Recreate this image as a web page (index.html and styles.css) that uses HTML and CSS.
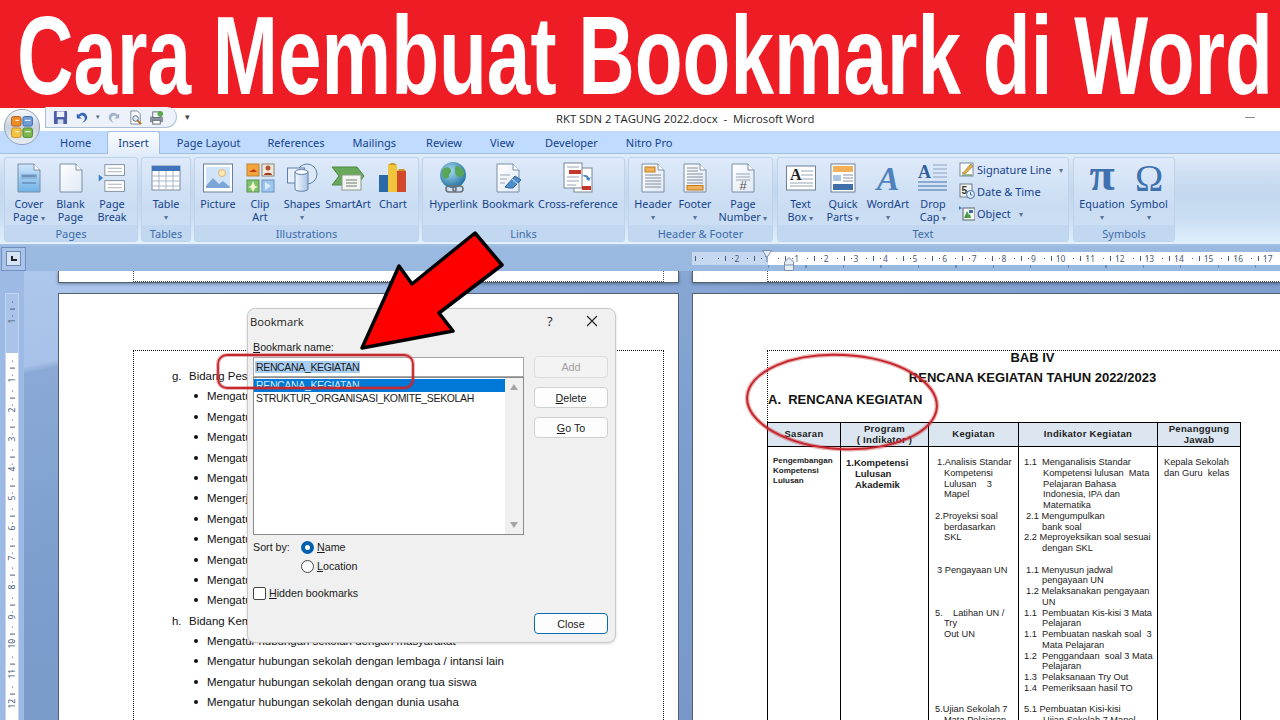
FILE: index.html
```html
<!DOCTYPE html>
<html lang="id">
<head>
<meta charset="utf-8">
<title>Cara Membuat Bookmark di Word</title>
<link rel="stylesheet" href="styles.css">
</head>
<body>
<svg class="defs" width="0" height="0" aria-hidden="true">
  <defs>
    <linearGradient id="gPaper" x1="0" y1="0" x2="1" y2="1"><stop offset="0" stop-color="#ffffff"/><stop offset="1" stop-color="#dfe8f4"/></linearGradient>
    <linearGradient id="gCover" x1="0" y1="0" x2="0" y2="1"><stop offset="0" stop-color="#cfe6fa"/><stop offset="1" stop-color="#6fb2e8"/></linearGradient>
    <linearGradient id="gOrb" x1="0" y1="0" x2="0" y2="1"><stop offset="0" stop-color="#f7f9fc"/><stop offset=".5" stop-color="#c7d3e2"/><stop offset="1" stop-color="#e9eff5"/></linearGradient>
    <radialGradient id="gGlobe" cx=".4" cy=".35" r=".7"><stop offset="0" stop-color="#a6dcef"/><stop offset="1" stop-color="#1f6d9f"/></radialGradient>
    <linearGradient id="gCyl" x1="0" y1="0" x2="1" y2="0"><stop offset="0" stop-color="#f4f8fd"/><stop offset="1" stop-color="#a9c5e6"/></linearGradient>
  </defs>
</svg>
<div class="app">
  <header class="banner"><h1 class="banner-text">Cara Membuat Bookmark di Word</h1></header>

  <div class="titlebar">
    <div class="qat">
      <svg class="qi" viewBox="0 0 16 16"><rect x="1" y="1" width="14" height="14" rx="1" fill="#4a5fa8"/><rect x="4" y="1.500" width="8" height="6" fill="#eef2fa"/><rect x="5" y="10" width="6" height="5" fill="#d4dbe9"/></svg>
      <svg class="qi" viewBox="0 0 16 16"><path d="M3 4v5h5L6 7c2.500-2 5-1 5.500 1.500.3 2-1 3.500-3 5 4-1 6-3.500 5.500-6.500C13 3 8.500 1.500 5 5z" fill="#3468b8"/></svg>
      <span class="qcaret">▾</span>
      <svg class="qi" viewBox="0 0 16 16"><path d="M13 4v5H8l2-2C8 5 5 6 4.500 8.500c-.3 2 1 3.500 3 5-4-1-6-3.500-5.500-6.500C3 3 7.500 1.500 11 5z" fill="#a3b2c6"/></svg>
      <svg class="qi" viewBox="0 0 16 16"><path d="M3 1h7l3 3v11H3z" fill="#fff" stroke="#7a8696"/><circle cx="8" cy="9" r="3" fill="#dfeaf6" stroke="#566478"/><path d="M10 11l4 4" stroke="#b8701d" stroke-width="2"/></svg>
      <svg class="qi" viewBox="0 0 16 16"><rect x="1" y="7" width="14" height="6" rx="1" fill="#8b93a0"/><rect x="4" y="2" width="8" height="6" fill="#eef1f5" stroke="#626a76"/><rect x="4" y="11" width="8" height="4" fill="#fff" stroke="#626a76"/><circle cx="12" cy="4" r="3" fill="#5ba84a"/></svg>
    </div>
    <span class="qat-more">▾</span>
    <div class="doc-title">RKT SDN 2 TAGUNG 2022.docx&nbsp; -&nbsp; Microsoft Word</div>
    <span class="minimize"></span>
  </div>

  <nav class="tabs">
    <span class="tab t-home">Home</span>
    <span class="tab t-insert">Insert</span>
    <span class="tab t-layout">Page Layout</span>
    <span class="tab t-ref">References</span>
    <span class="tab t-mail">Mailings</span>
    <span class="tab t-review">Review</span>
    <span class="tab t-view">View</span>
    <span class="tab t-dev">Developer</span>
    <span class="tab t-nitro">Nitro Pro</span>
  </nav>

  <section class="ribbon">
    <div class="group g-pages">
      <div class="tools">
        <div class="btn w42"><svg class="ico" viewBox="0 0 32 32"><path d="M5 2h16l6 6v22H5z" fill="url(#gCover)" stroke="#7a8ea6"/><path d="M21 2v6h6" fill="#fff" stroke="#7a8ea6"/><rect x="8" y="12" width="16" height="5" fill="#8ab4dc"/><path d="M9 14h14M9 21h14" stroke="#55719a"/></svg><span class="lbl">Cover<br>Page <i class="car">▾</i></span></div>
        <div class="btn w41"><svg class="ico" viewBox="0 0 32 32"><path d="M5 2h16l6 6v22H5z" fill="url(#gPaper)" stroke="#7a8ea6"/><path d="M21 2v6h6" fill="#fff" stroke="#7a8ea6"/></svg><span class="lbl">Blank<br>Page</span></div>
        <div class="btn w42"><svg class="ico" viewBox="0 0 36 32"><rect x="10" y="1" width="22" height="12" fill="#fff" stroke="#7a8696"/><rect x="10" y="19" width="22" height="12" fill="#fff" stroke="#7a8696"/><path d="M13 5h16M13 9h16M13 23h16M13 27h16" stroke="#9aa5b5"/><path d="M3 12l5 4-5 4z" fill="#3f7fc4"/></svg><span class="lbl">Page<br>Break</span></div>
      </div>
      <div class="glabel">Pages</div>
    </div>

    <div class="group g-tables">
      <div class="tools">
        <div class="btn w42"><svg class="ico" viewBox="0 0 32 32"><rect x="2" y="4" width="28" height="24" fill="#fff" stroke="#7d8aa0"/><rect x="2" y="4" width="28" height="5" fill="#3f74bd"/><path d="M2 14h28M2 19h28M2 24h28M9 9v19M16 9v19M23 9v19" stroke="#a9b6c8"/></svg><span class="lbl">Table<i class="car block">▾</i></span></div>
      </div>
      <div class="glabel">Tables</div>
    </div>

    <div class="group g-illus">
      <div class="tools">
        <div class="btn w42"><svg class="ico" viewBox="0 0 32 32"><rect x="1.500" y="2" width="29" height="28" fill="#fff" stroke="#6f7f96"/><rect x="4" y="5" width="24" height="21" fill="#cfe4f8"/><circle cx="20" cy="11" r="3.500" fill="#fbe7b8" stroke="#e3b36a"/><path d="M4 24l7-8 6 6 4-3 7 6v1H4z" fill="#7ba6d6"/></svg><span class="lbl">Picture</span></div>
        <div class="btn w42"><svg class="ico" viewBox="0 0 32 32"><rect x="3" y="2" width="12" height="12" fill="#f3a43a" stroke="#b98538"/><path d="M5 10l5-3 3 3z" fill="#c2341c"/><rect x="18" y="2" width="12" height="12" fill="#efe9dc" stroke="#8c8478"/><circle cx="24" cy="6" r="2.500" fill="#b3522e"/><path d="M20 13c0-3 8-3 8 0z" fill="#a6381f"/><rect x="3" y="18" width="12" height="12" fill="#7cc46a" stroke="#5d8f50"/><path d="M9 19l2 5 3 1-3 1-2 4-2-4-3-1 3-1z" fill="#f8f3d6"/><rect x="18" y="18" width="12" height="12" fill="#9cc5ee" stroke="#6b93bf"/><path d="M21 20l6 4-6 4z" fill="#d9ebfb"/></svg><span class="lbl">Clip<br>Art</span></div>
        <div class="btn w42"><svg class="ico" viewBox="0 0 32 32"><circle cx="21" cy="12" r="10" fill="#dbe8f6" stroke="#5f80a8"/><rect x="1.500" y="6" width="17" height="15" fill="#e8f0f9" stroke="#5f80a8"/><path d="M9 10v17c0 3 13 3 13 0V10z" fill="url(#gCyl)" stroke="#5f80a8"/><ellipse cx="15.500" cy="10" rx="6.500" ry="2.500" fill="#f5f9fd" stroke="#5f80a8"/></svg><span class="lbl">Shapes<i class="car block">▾</i></span></div>
        <div class="btn w50"><svg class="ico wide" viewBox="0 0 34 32"><path d="M1 5h25l7 9-7 9H1l7-9z" fill="#67a85b" stroke="#4b8a44"/><rect x="11" y="13" width="19" height="15" fill="#f3f5f3" stroke="#8c998c"/><path d="M15 18h11M15 21h11M15 24h11" stroke="#6d7a6d"/></svg><span class="lbl">SmartArt</span></div>
        <div class="btn w40"><svg class="ico" viewBox="0 0 32 32"><rect x="2" y="13" width="9" height="17" fill="#2a69a8"/><rect x="11" y="3" width="9" height="27" fill="#f1c53b"/><rect x="20" y="9" width="9" height="21" fill="#d1482c"/><path d="M11 3l3-2h3l3 2zM20 9l2-2h5l2 2z" fill="#c9992b"/></svg><span class="lbl">Chart</span></div>
      </div>
      <div class="glabel">Illustrations</div>
    </div>

    <div class="group g-links">
      <div class="tools">
        <div class="btn w53"><svg class="ico" viewBox="0 0 32 32"><circle cx="15" cy="13" r="13" fill="url(#gGlobe)"/><path d="M5 7c4-3 7-2 8 1s-2 3-2 6-5 3-6 1-2-5 0-8zM18 4c4 0 7 3 8 6s-3 6-5 5-4-2-4-5 0-5 1-6z" fill="#59a659"/><rect x="8" y="24" width="10" height="6" rx="3" fill="none" stroke="#6c7378" stroke-width="1.600"/><rect x="15" y="24" width="10" height="6" rx="3" fill="none" stroke="#6c7378" stroke-width="1.600"/></svg><span class="lbl">Hyperlink</span></div>
        <div class="btn w56"><svg class="ico" viewBox="0 0 32 32"><path d="M5 2h16l6 6v22H5z" fill="url(#gPaper)" stroke="#7a8ea6"/><path d="M21 2v6h6" fill="#fff" stroke="#7a8ea6"/><path d="M8 13h10M8 17h7M8 21h5" stroke="#9aa5b5"/><path d="M13 25l10-11 6 4-8 8-4 0z" fill="#4d8fca" stroke="#2f6398"/><path d="M20 17l6 5" stroke="#cfe3f6"/></svg><span class="lbl">Bookmark</span></div>
        <div class="btn w84"><svg class="ico" viewBox="0 0 32 32"><rect x="12" y="6" width="18" height="24" fill="#fff" stroke="#7a8696"/><rect x="2" y="1" width="18" height="25" fill="#fdfdfd" stroke="#7a8696"/><path d="M5 5h12M5 15h12M5 19h12M5 23h9" stroke="#9aa5b5"/><rect x="7" y="8" width="12" height="4" fill="#c3372b"/><rect x="20" y="24" width="9" height="4" fill="#c3372b"/><path d="M20 14c3-2 6-1 7 2l2-1-2 4-3-2 1-1c-1-1-3-2-5-2z" fill="#3f7fc4"/></svg><span class="lbl">Cross-reference</span></div>
      </div>
      <div class="glabel">Links</div>
    </div>

    <div class="group g-hf">
      <div class="tools">
        <div class="btn w42"><svg class="ico" viewBox="0 0 32 32"><path d="M5 2h16l6 6v22H5z" fill="url(#gPaper)" stroke="#7a8ea6"/><path d="M21 2v6h6" fill="#fff" stroke="#7a8ea6"/><rect x="8" y="5" width="10" height="5" fill="#f0b158" stroke="#c07d23"/><path d="M8 13h16M8 16h16M8 19h16M8 22h16M8 25h16" stroke="#828c99"/></svg><span class="lbl">Header<i class="car block">▾</i></span></div>
        <div class="btn w42"><svg class="ico" viewBox="0 0 32 32"><path d="M5 2h16l6 6v22H5z" fill="url(#gPaper)" stroke="#7a8ea6"/><path d="M21 2v6h6" fill="#fff" stroke="#7a8ea6"/><path d="M8 6h11M8 9h11M8 12h16M8 15h16M8 18h16M8 21h16" stroke="#828c99"/><rect x="8" y="23.500" width="16" height="4.500" fill="#f0b158" stroke="#c07d23"/></svg><span class="lbl">Footer<i class="car block">▾</i></span></div>
        <div class="btn w54"><svg class="ico" viewBox="0 0 32 32"><path d="M5 2h16l6 6v22H5z" fill="url(#gPaper)" stroke="#7a8ea6"/><path d="M21 2v6h6" fill="#fff" stroke="#7a8ea6"/><path d="M9 12h14M9 15h14M9 18h14" stroke="#9aa5b5"/><text x="16" y="28" class="glyph-hash">#</text></svg><span class="lbl">Page<br>Number <i class="car">▾</i></span></div>
      </div>
      <div class="glabel">Header &amp; Footer</div>
    </div>

    <div class="group g-text">
      <div class="tools">
        <div class="btn w41"><svg class="ico" viewBox="0 0 32 32"><rect x="1.500" y="4" width="29" height="24" fill="#fff" stroke="#6f7f96"/><text x="5" y="18" class="glyph-a">A</text><path d="M16 9h12M16 13h12M16 17h12M5 21h23M5 24h23" stroke="#9aa5b5"/></svg><span class="lbl">Text<br>Box <i class="car">▾</i></span></div>
        <div class="btn w44"><svg class="ico" viewBox="0 0 32 32"><rect x="4" y="2" width="24" height="28" fill="#fff" stroke="#6f7f96"/><rect x="6" y="4" width="20" height="6" fill="#f3b059"/><path d="M6 13h8v6H6z" fill="#a9c5e3"/><path d="M16 13h10M16 16h10M16 19h10" stroke="#8795a6"/><rect x="6" y="22" width="20" height="6" fill="#3f6fa8"/></svg><span class="lbl">Quick<br>Parts <i class="car">▾</i></span></div>
        <div class="btn w46"><svg class="ico" viewBox="0 0 32 32"><text x="16" y="28" class="glyph-wordart">A</text></svg><span class="lbl">WordArt<i class="car block">▾</i></span></div>
        <div class="btn w44"><svg class="ico" viewBox="0 0 32 32"><text x="1" y="16" class="glyph-drop">A</text><path d="M16 3h14M16 7h14M16 11h14M16 15h14" stroke="#8ea3bf"/><path d="M1 20h29M1 24h29M1 28h29" stroke="#3f6fa8"/></svg><span class="lbl">Drop<br>Cap <i class="car">▾</i></span></div>
        <div class="small-list">
          <div class="small"><svg class="sico" viewBox="0 0 16 16"><rect x="1" y="2" width="13" height="13" fill="#fff" stroke="#7a8696"/><path d="M3 12c3-1 5-6 9-9l2 2c-3 3-6 7-8 8z" fill="#e2b03f" stroke="#7b6a36" stroke-width=".5"/><path d="M3 14h10" stroke="#4f8a3f"/></svg>Signature Line <i class="car">▾</i></div>
          <div class="small"><svg class="sico" viewBox="0 0 16 16"><rect x="1" y="1" width="12" height="13" fill="#f2f2ef" stroke="#6f7c8c"/><text x="2.500" y="11" class="glyph-date">5</text><circle cx="11.500" cy="11.500" r="4" fill="#e7f0fa" stroke="#3a6ea8"/><path d="M11.500 9v3h2" stroke="#3a6ea8" fill="none"/></svg>Date &amp; Time</div>
          <div class="small"><svg class="sico" viewBox="0 0 16 16"><path d="M0 1l3 2-3 2z" fill="#3f7fc4"/><rect x="4" y="3" width="12" height="12" fill="#f2f5f2" stroke="#5b6770"/><path d="M5 13l3-7 2 4 1-1 1 4z" fill="#4d9b42"/><rect x="10" y="5" width="4" height="3" fill="#3a6ea8"/></svg>Object <i class="car">▾</i></div>
        </div>
      </div>
      <div class="glabel">Text</div>
    </div>

    <div class="group g-sym">
      <div class="tools">
        <div class="btn w52"><span class="sym-glyph pi">π</span><span class="lbl">Equation<i class="car block">▾</i></span></div>
        <div class="btn w42"><span class="sym-glyph">Ω</span><span class="lbl">Symbol<i class="car block">▾</i></span></div>
      </div>
      <div class="glabel">Symbols</div>
    </div>
  </section>

  <div class="ruler-row">
    <div class="tab-stop"><span class="tab-stop-in"><span class="tab-l"></span></span></div>
    <div class="hruler">
      <div class="hr-neg">
        <span class="rc"></span><span class="rc">2</span><span class="rc">1</span>
      </div>
      <div class="hr-pos">
        <span class="rc">1</span><span class="rc">2</span><span class="rc">3</span><span class="rc">4</span><span class="rc">5</span><span class="rc">6</span><span class="rc">7</span><span class="rc">8</span><span class="rc">9</span><span class="rc">10</span><span class="rc">11</span><span class="rc">12</span><span class="rc">13</span><span class="rc">14</span><span class="rc">15</span><span class="rc">16</span><span class="rc">17</span>
      </div>
    </div>
    <svg class="marker m-top" viewBox="0 0 10 8" width="10" height="8"><path d="M.5.500h9L5 7.500z" fill="#e4ecf6" stroke="#7d8ea6"/></svg>
    <svg class="marker m-bottom" viewBox="0 0 10 14" width="10" height="14"><path d="M5 .5L9.500 5v8.500H.5V5z" fill="#e4ecf6" stroke="#7d8ea6"/><path d="M.5 8h9" stroke="#7d8ea6"/></svg>
  </div>

  <main class="workspace">
    <div class="vruler-col">
      <div class="vruler">
        <div class="vr-neg"><span class="vc">1</span><span class="vc"></span></div>
        <div class="vr-pos">
          <span class="vc">1</span><span class="vc">2</span><span class="vc">3</span><span class="vc">4</span><span class="vc">5</span><span class="vc">6</span><span class="vc">7</span><span class="vc">8</span><span class="vc">9</span><span class="vc">10</span><span class="vc">11</span><span class="vc">12</span>
        </div>
      </div>
    </div>

    <div class="page-col left-col">
      <div class="page-end"><div class="end-margin"></div></div>
      <article class="page">
        <div class="text-area left-text">
          <p class="ln alpha"><span class="mk">g.</span>Bidang Pes</p>
          <p class="ln bul">Mengatur</p>
          <p class="ln bul">Mengatur</p>
          <p class="ln bul">Mengatur</p>
          <p class="ln bul">Mengatur</p>
          <p class="ln bul">Mengatur</p>
          <p class="ln bul">Mengerjakan</p>
          <p class="ln bul">Mengatur</p>
          <p class="ln bul">Mengatur</p>
          <p class="ln bul">Mengatur</p>
          <p class="ln bul">Mengatur</p>
          <p class="ln bul">Mengatur</p>
          <p class="ln alpha"><span class="mk">h.</span>Bidang Kem</p>
          <p class="ln bul">Mengatur hubungan sekolah dengan masyarakat</p>
          <p class="ln bul">Mengatur hubungan sekolah dengan lembaga / intansi lain</p>
          <p class="ln bul">Mengatur hubungan sekolah dengan orang tua siswa</p>
          <p class="ln bul">Mengatur hubungan sekolah dengan dunia usaha</p>
        </div>
      </article>
    </div>

    <div class="page-col right-col">
      <div class="page-end"><div class="end-margin right"></div></div>
      <article class="page">
        <div class="text-area right-text">
          <h2 class="h-bab">BAB IV</h2>
          <h2 class="h-plan">RENCANA KEGIATAN TAHUN 2022/2023</h2>
          <h3 class="h-a">A.&nbsp;&nbsp;RENCANA KEGIATAN</h3>
          <table class="plan">
            <colgroup><col class="c1"><col class="c2"><col class="c3"><col class="c4"><col class="c5"></colgroup>
            <thead>
              <tr><th>Sasaran</th><th>Program<br>( Indikator )</th><th>Kegiatan</th><th>Indikator Kegiatan</th><th>Penanggung<br>Jawab</th></tr>
            </thead>
            <tbody>
              <tr>
                <td class="sas">Pengembangan<br>Kompetensi<br>Lulusan</td>
                <td class="prog"><div class="p0">1.Kompetensi</div><div class="p1">Lulusan</div><div class="p1">Akademik</div></td>
                <td class="lines">
                  <div class="k1">1.Analisis Standar</div><div class="k2">Kompetensi</div><div class="k2">Lulusan&nbsp;&nbsp;&nbsp; 3</div><div class="k2">Mapel</div><div class="sp"></div>
                  <div class="k0">2.Proyeksi soal</div><div class="k2">berdasarkan</div><div class="k2">SKL</div><div class="sp"></div><div class="sp"></div>
                  <div class="k1">3 Pengayaan UN</div><div class="sp"></div><div class="sp"></div><div class="sp"></div>
                  <div class="k0">5.&nbsp;&nbsp;&nbsp; Latihan UN /</div><div class="k3">Try</div><div class="k2">Out UN</div>
                  <div class="sp"></div><div class="sp"></div><div class="sp"></div><div class="sp"></div><div class="sp"></div><div class="sp"></div>
                  <div class="k0">5.Ujian Sekolah 7</div><div class="k2">Mata Pelajaran</div>
                </td>
                <td class="lines">
                  <div class="i0">1.1&nbsp;&nbsp;Menganalisis Standar</div><div class="i2">Kompetensi lulusan&nbsp; Mata</div><div class="i2">Pelajaran Bahasa</div><div class="i2">Indonesia, IPA dan</div><div class="i2">Matematika</div>
                  <div class="i1">2.1 Mengumpulkan</div><div class="i3">bank soal</div>
                  <div class="i0">2.2 Meproyeksikan soal sesuai</div><div class="i3">dengan SKL</div><div class="sp"></div>
                  <div class="i1">1.1 Menyusun jadwal</div><div class="i3">pengayaan UN</div>
                  <div class="i1">1.2 Melaksanakan pengayaan</div><div class="i3">UN</div>
                  <div class="i0">1.1&nbsp; Pembuatan Kis-kisi 3 Mata</div><div class="i3">Pelajaran</div>
                  <div class="i0">1.1&nbsp; Pembuatan naskah soal&nbsp; 3</div><div class="i3">Mata Pelajaran</div>
                  <div class="i0">1.2&nbsp; Penggandaan&nbsp; soal 3 Mata</div><div class="i3">Pelajaran</div>
                  <div class="i0">1.3&nbsp; Pelaksanaan Try Out</div>
                  <div class="i0">1.4&nbsp; Pemeriksaan hasil TO</div><div class="sp"></div>
                  <div class="i0">5.1 Pembuatan Kisi-kisi</div><div class="i2">Ujian Sekolah 7 Mapel</div>
                </td>
                <td class="lines pj"><div>Kepala Sekolah</div><div>dan Guru&nbsp; kelas</div></td>
              </tr>
            </tbody>
          </table>
        </div>
      </article>
    </div>
  </main>

  <div class="orb">
    <svg viewBox="0 0 40 40" width="38" height="38"><circle cx="20" cy="20" r="18.500" fill="url(#gOrb)" stroke="#8d9db0"/><rect x="9" y="9" width="10" height="10" rx="2" fill="#ee8f26" stroke="#b8561a"/><rect x="21" y="9" width="10" height="10" rx="2" fill="#6f9ed8" stroke="#3f6aa6"/><rect x="9" y="21" width="10" height="10" rx="2" fill="#f3c43f" stroke="#c6912a"/><rect x="21" y="21" width="10" height="10" rx="2" fill="#7cb64c" stroke="#4d8a2e"/><path d="M13 13h4M23 13h6M13 25h4M23 25h6" stroke="#fff"/></svg>
  </div>

  <section class="dialog">
    <div class="dlg-head"><span class="dlg-title">Bookmark</span><span class="dlg-help">?</span><span class="dlg-close"><svg viewBox="0 0 12 12" width="12" height="12"><path d="M1 1l10 10M11 1L1 11" stroke="#222" stroke-width="1.100"/></svg></span></div>
    <div class="dlg-body">
      <div class="dlg-left">
        <label class="dlg-label"><u>B</u>ookmark name:</label>
        <div class="dlg-input"><span class="sel">RENCANA_KEGIATAN</span></div>
        <div class="dlg-list">
          <div class="items">
            <div class="item on">RENCANA_KEGIATAN</div>
            <div class="item">STRUKTUR_ORGANISASI_KOMITE_SEKOLAH</div>
          </div>
          <div class="scroll"><span class="up"></span><span class="down"></span></div>
        </div>
        <div class="sort">
          <span class="sort-label">Sort by:</span>
          <div class="radios">
            <div class="radio"><span class="dot on"></span><span><u>N</u>ame</span></div>
            <div class="radio"><span class="dot"></span><span><u>L</u>ocation</span></div>
          </div>
        </div>
        <div class="check"><span class="box"></span><span><u>H</u>idden bookmarks</span></div>
      </div>
      <div class="dlg-right">
        <button class="dbtn off">Add</button>
        <button class="dbtn del"><u>D</u>elete</button>
        <button class="dbtn goto"><u>G</u>o To</button>
        <button class="dbtn close">Close</button>
      </div>
    </div>
  </section>

  <svg class="overlay" viewBox="0 0 1280 720" width="1280" height="720" aria-hidden="true">
    <rect x="218" y="355" width="195" height="33" rx="9" fill="none" stroke="#c5282e" stroke-opacity=".35" stroke-width="4"/>
    <rect x="218" y="355" width="195" height="33" rx="9" fill="none" stroke="#c5282e" stroke-width="1.800"/>
    <ellipse cx="842" cy="402" rx="95" ry="47" transform="rotate(3 842 402)" fill="none" stroke="#c5282e" stroke-opacity=".35" stroke-width="4.500"/>
    <ellipse cx="842" cy="402" rx="95" ry="47" transform="rotate(3 842 402)" fill="none" stroke="#c5282e" stroke-width="2"/>
    <polygon points="362,348 399,266 412,284 475,233 502,265 439,313 453,331" fill="#fe0000" stroke="#000" stroke-width="3.500" stroke-linejoin="round"/>
  </svg>
</div>
</body>
</html>
```
FILE: styles.css
```css
* { box-sizing: border-box; }
html, body { margin: 0; padding: 0; background: #fff; }
body { font-family: "Liberation Sans", Arial, sans-serif; overflow: hidden; }
.defs { position: absolute; }
.app { position: relative; width: 1280px; height: 720px; overflow: hidden; display: flex; flex-direction: column; }

/* Banner */
.banner { height: 108px; flex: none; background: #ee1c25; overflow: hidden; display: flex; align-items: flex-start; }
.banner-text { margin: 6px 0 0 17px; width: max-content; flex: none; color: #fff; font: bold 112px/100px "Liberation Sans", sans-serif; white-space: nowrap; transform: scaleX(.699); transform-origin: left center; }

/* Title bar */
.titlebar { height: 23px; flex: none; background: #fff; display: flex; align-items: center; }
.qat { margin-left: 45px; margin-top: -4px; height: 21px; width: 132px; padding-left: 7px; display: flex; align-items: center; gap: 6px; border: 1px solid #a9bfd9; border-top: 0; border-radius: 0 12px 14px 0; background: #edf2fa; }
.qi { width: 15px; height: 15px; flex: none; }
.qcaret { font-size: 7px; color: #56677d; width: 6px; text-align: center; }
.qat-more { font-size: 9px; margin-left: 8px; margin-top: -6px; color: #444; }
.doc-title { margin-left: 366px; margin-top: -2px; font: 11.3px "Open Sans", sans-serif; color: #1e1e1e; white-space: nowrap; }
.minimize { margin-left: auto; margin-right: 25px; margin-top: -4px; width: 10px; height: 1px; background: #8a8a8a; }

/* Tabs */
.tabs { height: 23px; flex: none; background: #bfdbff; position: relative; display: flex; align-items: center; font: 11px "Noto Sans", sans-serif; color: #15428b; border-bottom: 1px solid #a5c0e0; }
.tab { white-space: nowrap; }
.t-home { margin-left: 60px; }
.t-insert { margin-left: 16px; padding: 0 10px; height: 23px; line-height: 22px; background: linear-gradient(#fafcff, #e2edfb); border: 1px solid #a3bdda; border-bottom: 0; border-radius: 3px 3px 0 0; margin-top: 1px; }
.t-layout { margin-left: 17px; }
.t-ref { margin-left: 27px; }
.t-mail { margin-left: 28px; }
.t-review { margin-left: 30px; }
.t-view { margin-left: 28px; }
.t-dev { margin-left: 31px; }
.t-nitro { margin-left: 28px; }

/* Ribbon */
.ribbon { height: 90px; flex: none; display: flex; padding: 3px 0 2px 4px; gap: 3px; background: linear-gradient(#e0ecfa 0, #cfdff2 20%, #c3d7ee 45%, #c9ddf3 70%, #e1f1fd 100%); }
.group { display: flex; flex-direction: column; border: 1px solid #bed2e9; border-radius: 3px; background: linear-gradient(#deeafa, #c9dcf2 60%, #cfe1f5); }
.tools { flex: 1; display: flex; }
.glabel { height: 16px; text-align: center; background: #c1d8f0; border-radius: 0 0 2px 2px; font: 11px/17px "Noto Sans", sans-serif; color: #3e6aaa; }
.g-pages { width: 134px; } .g-pages .tools { padding-left: 3px; }
.g-tables { width: 50px; } .g-tables .tools { padding-left: 3px; }
.g-illus { width: 225px; } .g-illus .tools { padding-left: 2px; }
.g-links { width: 203px; } .g-links .tools { padding-left: 4px; }
.g-hf { width: 145px; } .g-hf .tools { padding-left: 3px; }
.g-text { width: 292px; margin-left: 1px; } .g-text .tools { padding-left: 2px; }
.g-sym { width: 102px; margin-left: 1px; } .g-sym .tools { padding-left: 2px; }
.btn { display: flex; flex-direction: column; align-items: center; padding-top: 4px; flex: none; }
.w40 { width: 40px; } .w41 { width: 41px; } .w42 { width: 42px; } .w44 { width: 44px; } .w46 { width: 46px; } .w50 { width: 50px; } .w52 { width: 52px; } .w53 { width: 53px; } .w54 { width: 54px; } .w56 { width: 56px; } .w84 { width: 84px; }
.ico { width: 32px; height: 32px; display: block; flex: none; overflow: visible; }
.ico.wide { width: 34px; }
.lbl { margin-top: 3px; font: 10.8px/13px "Noto Sans", sans-serif; color: #15428b; text-align: center; white-space: nowrap; }
.car { font-style: normal; font-size: 8px; color: #5a7291; }
.car.block { display: block; line-height: 13px; }
.small-list { margin-left: 4px; padding-top: 3px; display: flex; flex-direction: column; gap: 6px; }
.small { display: flex; align-items: center; gap: 2px; height: 16px; font: 11px "Noto Sans", sans-serif; color: #15428b; white-space: pre; }
.small .car { margin-left: 3px; }
.sico { width: 16px; height: 16px; flex: none; }
.glyph-hash { font: 13px "Liberation Sans", sans-serif; fill: #555; text-anchor: middle; }
.glyph-a { font: bold 16px "Liberation Serif", serif; fill: #222; }
.glyph-wordart { font: italic bold 34px "Liberation Serif", serif; fill: #4f81bd; text-anchor: middle; }
.glyph-drop { font: bold 18px "Liberation Serif", serif; fill: #2f5f9e; }
.glyph-date { font: bold 10px "Liberation Sans", sans-serif; fill: #333; }
.sym-glyph { display: block; height: 32px; font: 38px/32px "Liberation Serif", serif; color: #3f71ae; flex: none; }
.sym-glyph.pi { font: bold 46px/26px "Liberation Serif", serif; height: 32px; }

/* Ruler row */
.ruler-row { height: 27px; flex: none; display: flex; position: relative; background: linear-gradient(#a7c2e5 0, #9ab9e0 3px, #9ab9e0 100%); }
.ruler-row::after { content: ""; position: absolute; left: 768px; right: 0; top: 21px; height: 3px; background: repeating-linear-gradient(90deg, #6e8ab0 0, #6e8ab0 1px, transparent 1px, transparent 37.5px); }
.tab-stop { width: 25px; height: 24px; margin: 3px 0 0 1px; padding: 3px 4px; border: 1px solid #6f8fc2; background: #a9c4e8; flex: none; }
.tab-stop-in { display: block; width: 15px; height: 15px; background: #d6e3f4; border: 1px solid #6e89ad; position: relative; }
.tab-l { position: absolute; left: 4px; top: 4px; width: 6px; height: 5px; border-left: 2px solid #222; border-bottom: 2px solid #222; }
.hruler { margin: 8px 0 6px 666px; height: 13px; display: flex; flex: 1; min-width: 0; }
.hr-neg { width: 76px; flex: none; background: #c6d8ef; display: flex; justify-content: flex-end; overflow: hidden; }
.hr-neg .rc:last-child { margin-right: -2px; }
.hr-pos { flex: 1; background: #fff; display: flex; overflow: hidden; padding-left: 2.5px; }
.rc { flex: none; width: 29.6px; text-align: right; padding-right: 1px; font: 8.5px/13px "Noto Sans", sans-serif; color: #4a5d78; background-image: linear-gradient(#4a5d78, #4a5d78), linear-gradient(#4a5d78, #4a5d78), linear-gradient(#4a5d78, #4a5d78); background-size: 1px 1px, 1px 5px, 1px 1px; background-repeat: no-repeat; background-position: 7px 6px, 14px 4px, 21px 6px; }
.marker { position: absolute; }
.m-top { left: 762px; top: 6px; }
.m-bottom { left: 784px; top: 13px; }

/* Workspace */
.workspace { flex: 1; min-height: 0; display: flex; background: linear-gradient(168deg, #adc7ec 0, #a7c2e8 14%, #8aa9d6 15%, #7c9dcd 45%, #7796c6 100%); }
.vruler-col { width: 58px; flex: none; background: linear-gradient(90deg, #9cbae4 0, #9cbae4 24px, transparent 24px); padding: 22px 0 0 5px; }
.vruler { width: 14px; height: 460px; display: flex; flex-direction: column; border: 1px solid #c4d7f0; border-bottom: 0; }
.vr-neg { height: 59px; flex: none; background: #a9c4e8; overflow: hidden; }
.vr-pos { flex: 1; background: #fff; overflow: hidden; }
.vc { display: block; height: 29.6px; writing-mode: vertical-rl; transform: rotate(180deg); text-align: left; font: 8.5px/12px "Noto Sans", sans-serif; color: #4a5d78; background-image: linear-gradient(#4a5d78, #4a5d78), linear-gradient(#4a5d78, #4a5d78), linear-gradient(#4a5d78, #4a5d78); background-size: 1px 1px, 5px 1px, 1px 1px; background-repeat: no-repeat; background-position: 5px 7px, 3px 14px, 5px 21px; }
.page-col { flex: none; display: flex; flex-direction: column; gap: 10px; }
.left-col { width: 621px; }
.right-col { margin-left: 13px; width: 588px; }
.page-end { height: 12px; flex: none; background: #fff; border-left: 1px solid #55606e; border-right: 1px solid #55606e; border-bottom: 1px solid #55606e; box-shadow: 0 1px 3px rgba(40,60,90,.5); }
.right-col .page-end { border-right: 0; }
.end-margin { margin-left: 74px; width: 531px; height: 11px; border-left: 1px dotted #555; border-right: 1px dotted #555; border-bottom: 1px dotted #555; }
.end-margin.right { width: 530px; border-right: 0; }
.page { flex: 1; min-height: 0; background: #fff; border: 1px solid #55606e; border-bottom: 0; padding: 56px 0 0 74px; overflow: hidden; }
.right-col .page { border-right: 0; }
.text-area { width: 531px; height: 500px; border: 1px dotted #111; border-bottom: 0; }

/* Left page text */
.left-text { padding-top: 15px; font-size: 11.45px; color: #111; }
.ln { margin: 0; height: 20.4px; line-height: 20.4px; white-space: nowrap; position: relative; }
.alpha { padding-left: 55px; }
.mk { position: absolute; left: 38px; }
.bul { padding-left: 73px; }
.bul::before { content: ""; position: absolute; left: 60px; top: 8px; width: 4px; height: 4px; border-radius: 50%; background: #111; }

/* Right page */
.h-bab, .h-plan, .h-a { margin: 0; line-height: 14px; font-weight: bold; color: #111; }
.h-bab { font-size: 13px; text-align: center; }
.h-plan { font-size: 13px; text-align: center; margin-top: 6px; }
.h-a { font-size: 13px; margin-top: 8px; }
.plan { margin: 15px 0 0 -1px; width: 474px; table-layout: fixed; border-collapse: collapse; font-size: 9.25px; color: #222; }
.c1 { width: 73px; } .c2 { width: 88px; } .c3 { width: 90px; } .c4 { width: 139px; } .c5 { width: 83px; }
.plan th, .plan td { border: 1px solid #000; padding: 0; vertical-align: top; }
.plan th { height: 24px; vertical-align: middle; background: #dce6f1; font-size: 9.5px; line-height: 10.5px; letter-spacing: .3px; }
.plan td { line-height: 10.76px; padding-top: 10px; }
.plan .sas { padding: 9px 0 0 5px; font: bold 8px/10.2px "Liberation Sans", sans-serif; }
.plan .prog { padding: 11px 0 0 5px; font-size: 9.5px; font-weight: bold; }
.p1 { padding-left: 9px; }
.lines > div { height: 10.76px; white-space: nowrap; }
.k0 { padding-left: 6px; } .k1 { padding-left: 8px; } .k2 { padding-left: 15px; } .k3 { padding-left: 15px; }
.i0 { padding-left: 5px; } .i1 { padding-left: 7px; } .i2 { padding-left: 24px; } .i3 { padding-left: 23px; }
.plan .pj { padding-left: 6px; }

/* Office orb */
.orb { position: absolute; left: 3px; top: 108px; width: 38px; height: 38px; }

/* Dialog */
.dialog { position: absolute; left: 247px; top: 308px; width: 369px; height: 335px; background: #f0f0f0; border: 1px solid #c9c9c9; border-radius: 8px; font: 10.7px "Liberation Sans", sans-serif; color: #1a1a1a; box-shadow: 0 1px 3px rgba(0,0,0,.15); }
.dlg-head { height: 24px; padding: 0 0 0 2px; display: flex; align-items: center; font: 11.2px "Open Sans", sans-serif; }
.dlg-title { flex: 1; }
.dlg-help { width: 39px; font-size: 13px; }
.dlg-close { width: 29px; display: flex; }
.dlg-body { display: flex; padding: 0 7px 0 5px; }
.dlg-left { width: 272px; display: flex; flex-direction: column; }
.dlg-label { height: 24px; padding-top: 7px; line-height: 14px; }
.dlg-input { height: 20px; background: #fff; border: 1px solid #a6a6a6; padding: 2px 1px; line-height: 14px; font-size: 10.5px; letter-spacing: -.35px; }
.sel { background: #a8cdf0; color: #1a1a1a; padding: 0 1px; }
.dlg-list { height: 158px; background: #fff; border: 1px solid #8b8b8b; display: flex; font-size: 10.5px; letter-spacing: -.35px; }
.items { flex: 1; padding-top: 1px; }
.item { height: 13px; line-height: 13px; padding-left: 2px; white-space: nowrap; }
.item.on { background: #0078d7; color: #d8e9f8; }
.scroll { width: 18px; flex: none; background: #f0f0f0; display: flex; flex-direction: column; justify-content: space-between; align-items: center; padding: 6px 0 6px; }
.up, .down { display: block; width: 0; height: 0; border-left: 4px solid transparent; border-right: 4px solid transparent; }
.up { border-bottom: 6px solid #a6a6a6; }
.down { border-top: 6px solid #a6a6a6; }
.sort { display: flex; margin-top: 3px; }
.sort-label { width: 48px; line-height: 16px; padding-top: 1px; }
.radios { display: flex; flex-direction: column; gap: 6px; margin-top: 3px; }
.radio { height: 13px; display: flex; align-items: center; gap: 3px; line-height: 13px; }
.dot { width: 13px; height: 13px; border-radius: 50%; border: 1px solid #444; background: #fff; flex: none; }
.dot.on { border: 4px solid #005fb0; }
.check { display: flex; align-items: center; gap: 3px; margin-top: 13px; height: 14px; }
.box { width: 13px; height: 13px; border: 1px solid #444; border-radius: 2px; background: #fff; flex: none; }
.dlg-right { margin-left: 10px; width: 74px; display: flex; flex-direction: column; padding-top: 23px; }
.dbtn { width: 74px; height: 21px; padding: 0; background: #fdfdfd; border: 1px solid #d0d0d0; border-radius: 4px; font: 10.7px "Liberation Sans", sans-serif; color: #1a1a1a; flex: none; }
.dbtn.off { height: 22px; background: #f3f3f3; color: #a0a0a0; border-color: #dcdcdc; }
.del { margin-top: 9px; }
.goto { margin-top: 9px; }
.close { margin-top: 175px; border: 1px solid #0a6cb0; }

/* Annotations */
.overlay { position: absolute; left: 0; top: 0; pointer-events: none; }
```
